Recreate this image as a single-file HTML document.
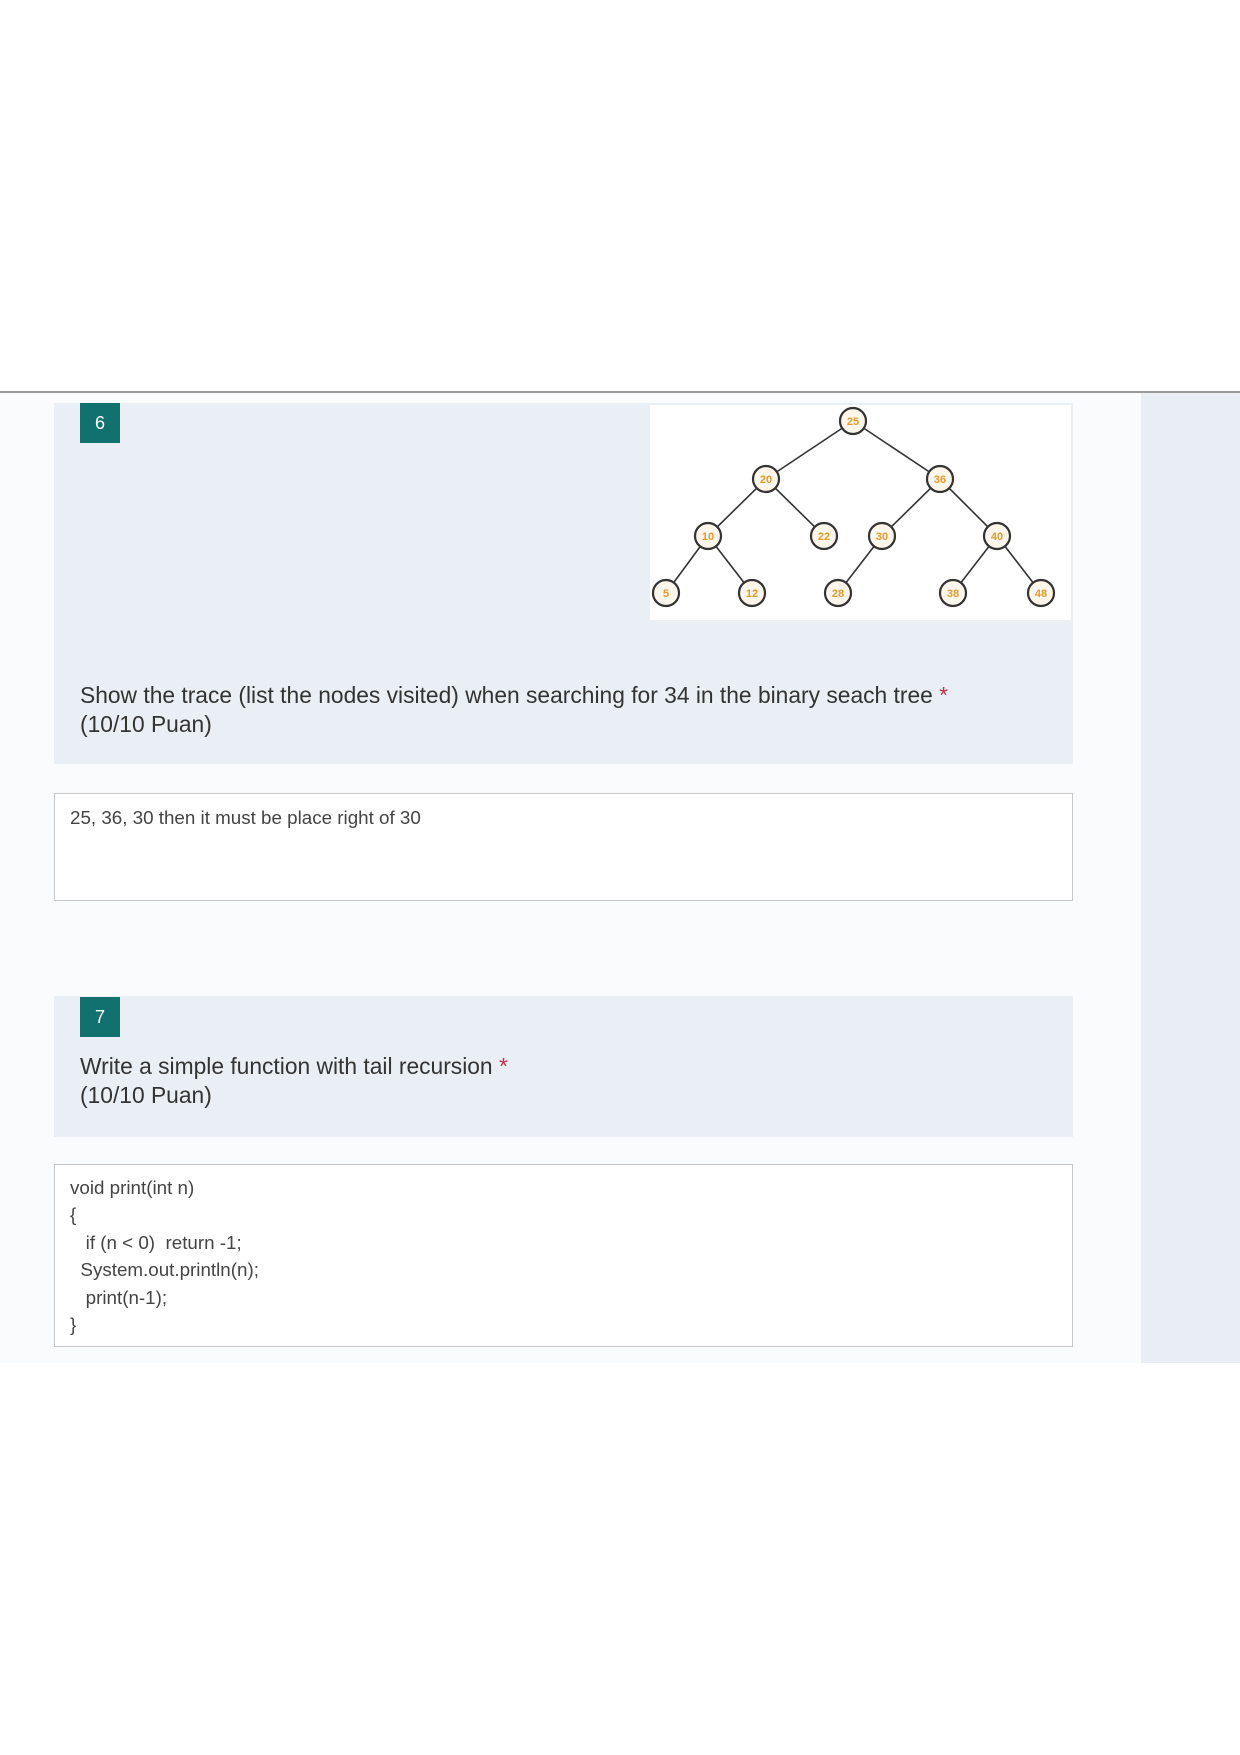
<!DOCTYPE html>
<html><head><meta charset="utf-8"><style>
body{margin:0;width:1240px;height:1755px;background:#fff;position:relative;font-family:"Liberation Sans",sans-serif;overflow:hidden}
.a{position:absolute}
.main{left:0;top:392px;width:1141px;height:971px;background:#f9fbfc}
.right{left:1141px;top:392px;width:99px;height:971px;background:#e8eef3}
.line{left:0;top:391px;width:1240px;height:2px;background:#9a9a9a}
.card{background:#e9eff4;left:54px;width:1019px}
.badge{background:#10716f;color:#fff;width:40px;height:40px;font-size:18px;text-align:center;line-height:40px}
.q{color:#333;font-size:22.8px;line-height:29px;left:80px;white-space:nowrap}
.q .s{color:#c4314b}
.box{left:54px;width:1017px;background:#fff;border:1px solid #c8c8c8}
.t{color:#444;font-size:18.8px;left:70px;line-height:27.4px;white-space:nowrap}
</style></head><body>
<div class="a main"></div><div class="a right"></div><div class="a line"></div>
<div class="a card" style="top:403px;height:361px"></div>
<div class="a badge" style="left:80px;top:403px">6</div>
<svg class="a" style="left:650px;top:405px" width="421" height="215" viewBox="650 405 421 215">
<rect x="650" y="405" width="421" height="215" fill="#fff"/>
<g stroke="#333" stroke-width="1.6">
<line x1="853" y1="421" x2="766" y2="479"/><line x1="853" y1="421" x2="940" y2="479"/>
<line x1="766" y1="479" x2="708" y2="536"/><line x1="766" y1="479" x2="824" y2="536"/>
<line x1="940" y1="479" x2="882" y2="536"/><line x1="940" y1="479" x2="997" y2="536"/>
<line x1="708" y1="536" x2="666" y2="593"/><line x1="708" y1="536" x2="752" y2="593"/>
<line x1="882" y1="536" x2="838" y2="593"/><line x1="997" y1="536" x2="953" y2="593"/><line x1="997" y1="536" x2="1041" y2="593"/>
</g>
<g fill="#fdf6ea" stroke="#333" stroke-width="2.2">
<circle cx="853" cy="421" r="13"/><circle cx="766" cy="479" r="13"/><circle cx="940" cy="479" r="13"/>
<circle cx="708" cy="536" r="13"/><circle cx="824" cy="536" r="13"/><circle cx="882" cy="536" r="13"/><circle cx="997" cy="536" r="13"/>
<circle cx="666" cy="593" r="13"/><circle cx="752" cy="593" r="13"/><circle cx="838" cy="593" r="13"/><circle cx="953" cy="593" r="13"/><circle cx="1041" cy="593" r="13"/>
</g>
<g fill="#e89a2c" font-size="11" font-weight="bold" text-anchor="middle" font-family="Liberation Sans">
<text x="853" y="425">25</text><text x="766" y="483">20</text><text x="940" y="483">36</text>
<text x="708" y="540">10</text><text x="824" y="540">22</text><text x="882" y="540">30</text><text x="997" y="540">40</text>
<text x="666" y="597">5</text><text x="752" y="597">12</text><text x="838" y="597">28</text><text x="953" y="597">38</text><text x="1041" y="597">48</text>
</g></svg>
<div class="a q" style="top:681px">Show the trace (list the nodes visited) when searching for 34 in the binary seach tree <span class="s">*</span><br>(10/10 Puan)</div>
<div class="a box" style="top:793px;height:106px"></div>
<div class="a t" style="top:804px">25, 36, 30 then it must be place right of 30</div>
<div class="a card" style="top:996px;height:141px"></div>
<div class="a badge" style="left:80px;top:997px">7</div>
<div class="a q" style="top:1052px">Write a simple function with tail recursion <span class="s">*</span><br>(10/10 Puan)</div>
<div class="a box" style="top:1164px;height:181px"></div>
<div class="a t" style="top:1174px">void print(int n)<br>{<br>&nbsp;&nbsp;&nbsp;if (n &lt; 0)&nbsp; return -1;<br>&nbsp;&nbsp;System.out.println(n);<br>&nbsp;&nbsp;&nbsp;print(n-1);<br>}</div>
</body></html>
